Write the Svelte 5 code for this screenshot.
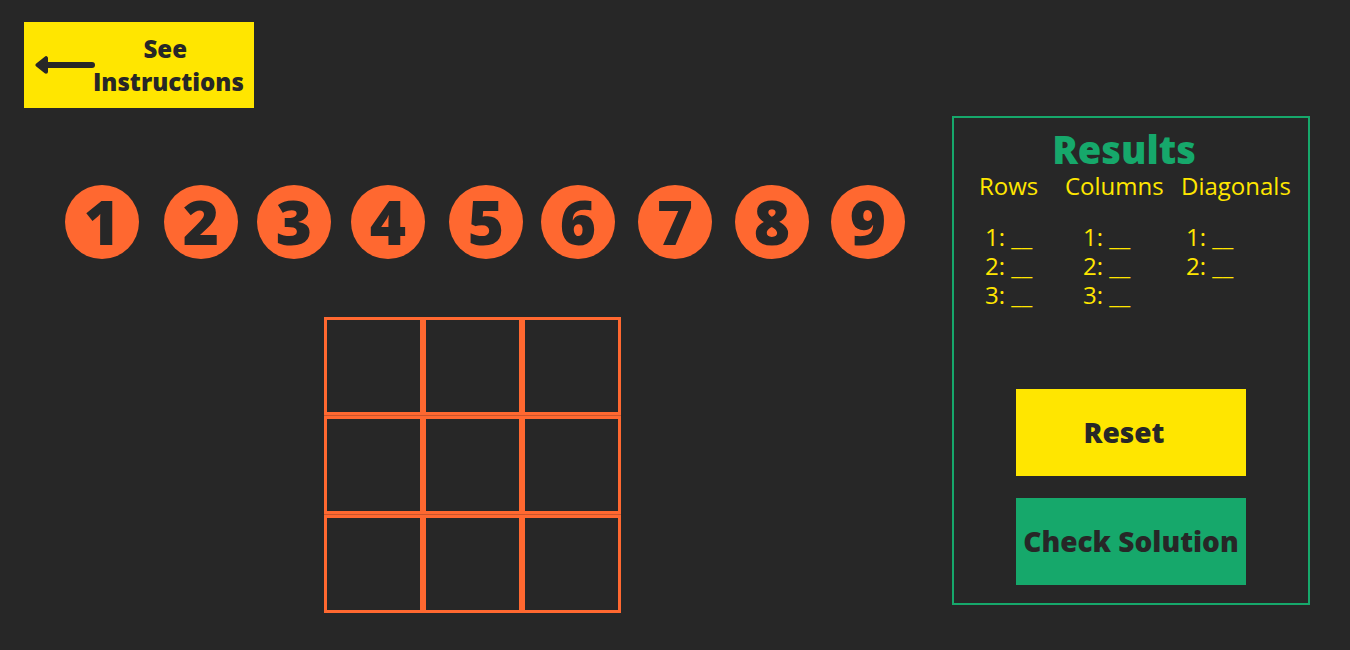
<script>
  const numbers = [1, 2, 3, 4, 5, 6, 7, 8, 9];
  const cells = Array.from({ length: 9 });
  const groups = [
    { title: 'Rows', kind: 'rows', lines: [1, 2, 3] },
    { title: 'Columns', kind: 'columns', lines: [1, 2, 3] },
    { title: 'Diagonals', kind: 'diagonals', lines: [1, 2] }
  ];
</script>

<main>
  <section class="game">
    <button class="instructions">
      <svg viewBox="0 0 60 20" width="60" height="20" aria-hidden="true">
        <path d="M10 10H57" stroke="#272727" stroke-width="6" stroke-linecap="round" />
        <path d="M2.5 10L11 3.2V16.8Z" fill="#272727" stroke="#272727" stroke-width="4" stroke-linejoin="round" />
      </svg>
      <span>See&nbsp;<br />Instructions</span>
    </button>
    <div class="numbers">
      {#each numbers as n}
        <button class="ball">{n}</button>
      {/each}
    </div>
    <div class="board">
      {#each cells as _, i}
        <button class="cell" aria-label={`Cell ${i + 1}`}></button>
      {/each}
    </div>
  </section>

  <aside>
    <h1>Results</h1>
    <div class="groups">
      {#each groups as g}
        <section class={g.kind}>
          <h2>{g.title}</h2>
          <ul>
            {#each g.lines as l}
              <li>{l}: __</li>
            {/each}
          </ul>
        </section>
      {/each}
    </div>
    <div class="actions">
      <button class="reset">Reset</button>
      <button class="check">Check Solution</button>
    </div>
  </aside>
</main>

<style>
  :global(body) { margin: 0; background: #272727; }
  main {
    box-sizing: border-box;
    display: flex;
    justify-content: space-between;
    align-items: flex-start;
    min-height: 100vh;
    padding: 22px 40px 36px 24px;
    font-family: "Open Sans", sans-serif;
    color: #272727;
  }
  button { border: 0; padding: 0; font: inherit; color: inherit; cursor: pointer; }
  .game { flex: 1; max-width: 881px; }
  .instructions {
    display: flex;
    align-items: center;
    width: 230px;
    height: 86px;
    padding-left: 11px;
    background: #ffe600;
    font-size: 24px;
    line-height: 33px;
    font-weight: 800;
  }
  .instructions svg { flex: none; }
  .instructions span { margin-left: -2px; padding-bottom: 1px; }
  .numbers {
    display: grid;
    grid-template-columns: 99fr 93fr 94fr 98fr 92fr 97fr 97fr 96fr 74px;
    margin: 77px 0 0 41px;
  }
  .ball {
    box-sizing: border-box;
    width: 74px;
    height: 74px;
    padding-bottom: 2px;
    border-radius: 50%;
    background: #ff6830;
    font-size: 62px;
    line-height: 72px;
    font-weight: 800;
  }
  .board {
    display: grid;
    grid-template-columns: repeat(3, 99px);
    grid-auto-rows: 98px;
    row-gap: 1px;
    width: 297px;
    margin: 58px 0 0 300px;
    background: #c9552c;
  }
  .cell { border: 3px solid #ff6830; background: #272727; }
  aside {
    box-sizing: border-box;
    width: 358px;
    margin-top: 94px;
    border: 2px solid #16a86b;
    padding: 7px 17px 18px;
    color: #ffe600;
  }
  h1 {
    margin: 0;
    padding-right: 14px;
    text-align: center;
    font-size: 38px;
    line-height: 48px;
    font-weight: 800;
    color: #16a86b;
  }
  .groups {
    display: grid;
    grid-template-columns: 86fr 116fr 110fr;
    height: 216px;
    padding-left: 8px;
  }
  h2 { margin: 0; font-size: 24px; line-height: 26px; font-weight: 400; }
  ul { list-style: none; margin: 23px 0 0; padding: 0; font-size: 24px; line-height: 29px; }
  .rows ul { padding-left: 6px; }
  .columns ul { padding-left: 18px; }
  .diagonals ul { padding-left: 5px; }
  .actions { display: flex; flex-direction: column; align-items: center; gap: 22px; }
  .actions button {
    box-sizing: border-box;
    width: 230px;
    height: 87px;
    padding-bottom: 2px;
    font-size: 28px;
    font-weight: 800;
    color: #272727;
  }
  .actions .reset { padding-right: 14px; background: #ffe600; }
  .actions .check { background: #16a86b; }
</style>
